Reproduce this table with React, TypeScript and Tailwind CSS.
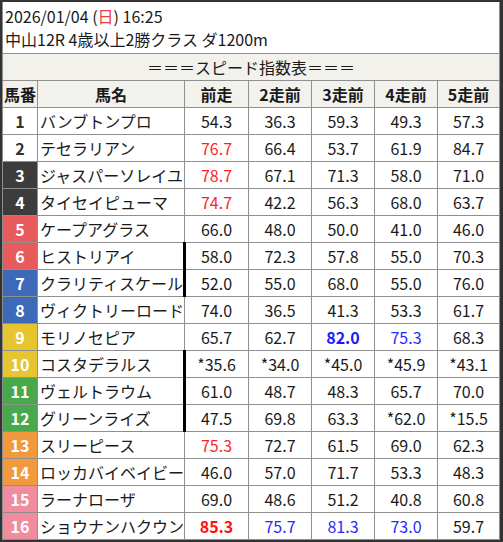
import React from "react";

type V = { t: string; c?: "r" | "b" | "R" | "B" };
type Row = { n: number; name: string; bg: string; fg: string; bar?: boolean; v: V[] };

const p = (t: string, c?: V["c"]): V => ({ t, c });

const rows: Row[] = [
  { n: 1, name: "バンブトンプロ", bg: "bg-white", fg: "text-[#333]", v: [p("54.3"), p("36.3"), p("59.3"), p("49.3"), p("57.3")] },
  { n: 2, name: "テセラリアン", bg: "bg-white", fg: "text-[#333]", v: [p("76.7", "r"), p("66.4"), p("53.7"), p("61.9"), p("84.7")] },
  { n: 3, name: "ジャスパーソレイユ", bg: "bg-[#3c3c3c]", fg: "text-white", v: [p("78.7", "r"), p("67.1"), p("71.3"), p("58.0"), p("71.0")] },
  { n: 4, name: "タイセイピューマ", bg: "bg-[#3c3c3c]", fg: "text-white", v: [p("74.7", "r"), p("42.2"), p("56.3"), p("68.0"), p("63.7")] },
  { n: 5, name: "ケープアグラス", bg: "bg-[#e85a5c]", fg: "text-white", v: [p("66.0"), p("48.0"), p("50.0"), p("41.0"), p("46.0")] },
  { n: 6, name: "ヒストリアイ", bg: "bg-[#e85a5c]", fg: "text-white", bar: true, v: [p("58.0"), p("72.3"), p("57.8"), p("55.0"), p("70.3")] },
  { n: 7, name: "クラリティスケール", bg: "bg-[#3d6ab8]", fg: "text-white", bar: true, v: [p("52.0"), p("55.0"), p("68.0"), p("55.0"), p("76.0")] },
  { n: 8, name: "ヴィクトリーロード", bg: "bg-[#3d6ab8]", fg: "text-white", v: [p("74.0"), p("36.5"), p("41.3"), p("53.3"), p("61.7")] },
  { n: 9, name: "モリノセピア", bg: "bg-[#e6c530]", fg: "text-white", v: [p("65.7"), p("62.7"), p("82.0", "B"), p("75.3", "b"), p("68.3")] },
  { n: 10, name: "コスタデラルス", bg: "bg-[#e6c530]", fg: "text-white", bar: true, v: [p("*35.6"), p("*34.0"), p("*45.0"), p("*45.9"), p("*43.1")] },
  { n: 11, name: "ヴェルトラウム", bg: "bg-[#47a94b]", fg: "text-white", bar: true, v: [p("61.0"), p("48.7"), p("48.3"), p("65.7"), p("70.0")] },
  { n: 12, name: "グリーンライズ", bg: "bg-[#47a94b]", fg: "text-white", bar: true, v: [p("47.5"), p("69.8"), p("63.3"), p("*62.0"), p("*15.5")] },
  { n: 13, name: "スリーピース", bg: "bg-[#f0993d]", fg: "text-white", v: [p("75.3", "r"), p("72.7"), p("61.5"), p("69.0"), p("62.3")] },
  { n: 14, name: "ロッカバイベイビー", bg: "bg-[#f0993d]", fg: "text-white", v: [p("46.0"), p("57.0"), p("71.7"), p("53.3"), p("48.3")] },
  { n: 15, name: "ラーナローザ", bg: "bg-[#f08c9e]", fg: "text-white", v: [p("69.0"), p("48.6"), p("51.2"), p("40.8"), p("60.8")] },
  { n: 16, name: "ショウナンハクウン", bg: "bg-[#f08c9e]", fg: "text-white", v: [p("85.3", "R"), p("75.7", "b"), p("81.3", "b"), p("73.0", "b"), p("59.7")] },
];

const cls = (c?: V["c"]) => {
  if (c === "r") return "text-[#ff1f1f]";
  if (c === "R") return "text-[#ff1010] font-bold";
  if (c === "b") return "text-[#2a2aff]";
  if (c === "B") return "text-[#1a1aff] font-bold";
  return "text-[#1a1a1a]";
};

const grid = "grid grid-cols-[35px_147px_64px_63px_63px_63px_61px]";
const line = "border-[#8f8f8f]";

export default function App() {
  return (
    <div
      className="w-[503px] h-[542px] border-t-2 border-l-2 border-r-[3px] border-b-2 border-[#333] bg-white text-[16px] text-[#1a1a1a]"
      style={{ fontFamily: '"Noto Sans CJK JP", "Noto Sans", sans-serif' }}
    >
      <div className={`h-full border-l border-r ${line} flex flex-col`}>
        <div className={`h-[52px] border-b ${line} pl-[2px] pt-[3px] leading-[23px]`}>
          <div>
            2026/01/04 (<span className="text-[#e84040]">日</span>) 16:25
          </div>
          <div>中山12R 4歳以上2勝クラス ダ1200m</div>
        </div>
        <div className={`h-[27px] border-b ${line} bg-[#f2f1ec] flex items-center justify-center`}>
          ＝＝＝スピード指数表＝＝＝
        </div>
        <div className={`${grid} h-[27px] border-b ${line} bg-[#f2f1ec] font-bold`}>
          {["馬番", "馬名", "前走", "2走前", "3走前", "4走前", "5走前"].map((h, i) => (
            <div
              key={h}
              className={`flex items-center justify-center ${i < 6 ? `border-r ${line}` : ""}`}
            >
              {h}
            </div>
          ))}
        </div>
        {rows.map((r) => (
          <div key={r.n} className={`${grid} h-[27px] border-b ${line}`}>
            <div className={`${r.bg} ${r.fg} font-bold flex items-center justify-center border-r ${line}`}>
              {r.n}
            </div>
            <div className={`relative flex items-center pl-[2px] whitespace-nowrap border-r ${line}`}>
              {r.name}
              {r.bar && <div className="absolute right-[-2px] top-[-1px] bottom-[-1px] w-[3px] bg-black" />}
            </div>
            {r.v.map((x, i) => (
              <div
                key={i}
                className={`flex items-center justify-center ${cls(x.c)} ${i < 4 ? `border-r ${line}` : ""}`}
              >
                {x.t}
              </div>
            ))}
          </div>
        ))}
      </div>
    </div>
  );
}
